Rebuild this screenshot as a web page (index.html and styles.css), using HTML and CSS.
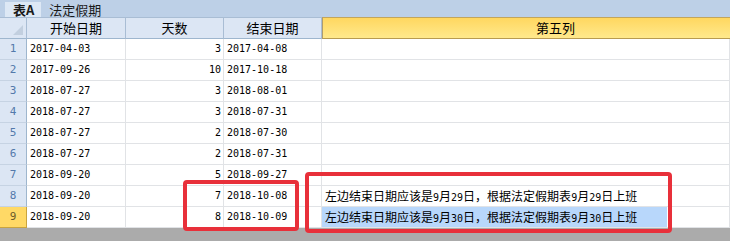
FILE: index.html
```html
<!DOCTYPE html>
<html>
<head>
<meta charset="utf-8" />
<title>表A</title>
<link rel="stylesheet" href="styles.css">
</head>
<body>
<div class="sheet">
  <div class="tabs">
    <span class="tab active">表A</span>
    <span class="tab">法定假期</span>
  </div>

  <div class="grid">
    <div class="corner"><span class="tri"></span></div>
    <div class="colhead">开始日期</div>
    <div class="colhead">天数</div>
    <div class="colhead">结束日期</div>
    <div class="colhead current">第五列</div>

    <div class="rowhead">1</div><div class="cell num">2017-04-03</div><div class="cell num right">3</div><div class="cell num">2017-04-08</div><div class="cell"></div>
    <div class="rowhead">2</div><div class="cell num">2017-09-26</div><div class="cell num right">10</div><div class="cell num">2017-10-18</div><div class="cell"></div>
    <div class="rowhead">3</div><div class="cell num">2018-07-27</div><div class="cell num right">3</div><div class="cell num">2018-08-01</div><div class="cell"></div>
    <div class="rowhead">4</div><div class="cell num">2018-07-27</div><div class="cell num right">3</div><div class="cell num">2018-07-31</div><div class="cell"></div>
    <div class="rowhead">5</div><div class="cell num">2018-07-27</div><div class="cell num right">2</div><div class="cell num">2018-07-30</div><div class="cell"></div>
    <div class="rowhead">6</div><div class="cell num">2018-07-27</div><div class="cell num right">2</div><div class="cell num">2018-07-31</div><div class="cell"></div>
    <div class="rowhead">7</div><div class="cell num">2018-09-20</div><div class="cell num right">5</div><div class="cell num">2018-09-27</div><div class="cell"></div>
    <div class="rowhead">8</div><div class="cell num">2018-09-20</div><div class="cell num right">7</div><div class="cell num">2018-10-08</div><div class="cell note"><span class="txt">左边结束日期应该是<span class="d">9</span>月<span class="d">29</span>日，根据法定假期表<span class="d">9</span>月<span class="d">29</span>日上班</span></div>
    <div class="rowhead current">9</div><div class="cell num">2018-09-20</div><div class="cell num right">8</div><div class="cell num">2018-10-09</div><div class="cell note"><span class="txt selected">左边结束日期应该是<span class="d">9</span>月<span class="d">30</span>日，根据法定假期表<span class="d">9</span>月<span class="d">30</span>日上班</span></div>
  </div>

  <div class="statusbar"></div>

  <!-- annotation boxes drawn over the grid -->
  <div class="mark mark-days"></div>
  <div class="mark mark-note"></div>
</div>
</body>
</html>
```

FILE: styles.css
```css
body {
  margin: 0;
  background: #fff;
  font-family: "Noto Sans CJK SC", sans-serif;
  font-size: 12px;
  color: #000;
}
.sheet {
  position: relative;
  width: 730px;
  height: 241px;
  overflow: hidden;
}
.tabs {
  display: flex;
  align-items: flex-end;
  height: 18px;
  background: #bdd0e7;
  padding-left: 5px;
  box-sizing: border-box;
}
.tab {
  height: 16px;
  line-height: 16px;
  padding: 0 8px;
  color: #1a1a1a;
  font-size: 13px;
}
.tab.active {
  background: #dde8f5;
  font-weight: bold;
  padding: 0 7px 0 8px;
}
.grid {
  display: grid;
  grid-template-columns: 27px 99px 98px 98px 1fr;
  grid-auto-rows: 21px;
}
.corner, .colhead {
  background: #dce6f4;
  border-top: 1px solid #a9bdd4;
  border-right: 1px solid #a9bdd4;
  border-bottom: 1px solid #9eb6ce;
  box-sizing: border-box;
  height: 22px;
  margin-top: -1px;
}
.corner {
  position: relative;
}
.tri {
  position: absolute;
  right: 3px;
  bottom: 3px;
  width: 0;
  height: 0;
  border-left: 10px solid transparent;
  border-bottom: 10px solid #c2cfdf;
}
.colhead {
  text-align: center;
  line-height: 20px;
  font-size: 13px;
}
.colhead.current {
  background: linear-gradient(#ffd760, #ffe98c);
  border-top-color: #c2a55c;
  border-bottom-color: #b89b50;
  border-left: 1px solid #b09c6c;
  border-right: 0;
  padding-left: 58px;
}
.rowhead {
  background: #dce6f4;
  border-right: 1px solid #9eb6ce;
  border-bottom: 1px solid #c6d3e3;
  box-sizing: border-box;
  text-align: center;
  line-height: 20px;
  color: #5379ab;
  font-family: "DejaVu Sans Mono", monospace;
  font-size: 11px;
}
.rowhead.current {
  background: #ffd966;
  border-right-color: #c9a43f;
  border-bottom-color: #c9a43f;
  color: #6b5a2a;
}
.cell {
  border-right: 1px solid #e1e3e6;
  border-bottom: 1px solid #e1e3e6;
  box-sizing: border-box;
  line-height: 20px;
  padding: 0 2px 0 3px;
  white-space: nowrap;
  overflow: hidden;
}
.num {
  font-family: "DejaVu Sans Mono", monospace;
  font-size: 10px;
}
.right {
  text-align: right;
}
.note {
  padding-left: 0;
}
.txt {
  display: inline-block;
  padding: 0 30px 0 3px;
  line-height: 20px;
}
.txt.selected {
  background: #b8d7fb;
}
.d {
  font-family: "DejaVu Sans Mono", monospace;
  font-size: 10px;
}
.statusbar {
  height: 13px;
  background: #ababab;
}
.mark {
  position: absolute;
  border: 4px solid #e8303a;
  border-radius: 4px;
  box-sizing: border-box;
}
.mark-days {
  left: 183px;
  top: 180px;
  width: 116px;
  height: 51px;
}
.mark-note {
  left: 305px;
  top: 172px;
  width: 367px;
  height: 61px;
}
```
